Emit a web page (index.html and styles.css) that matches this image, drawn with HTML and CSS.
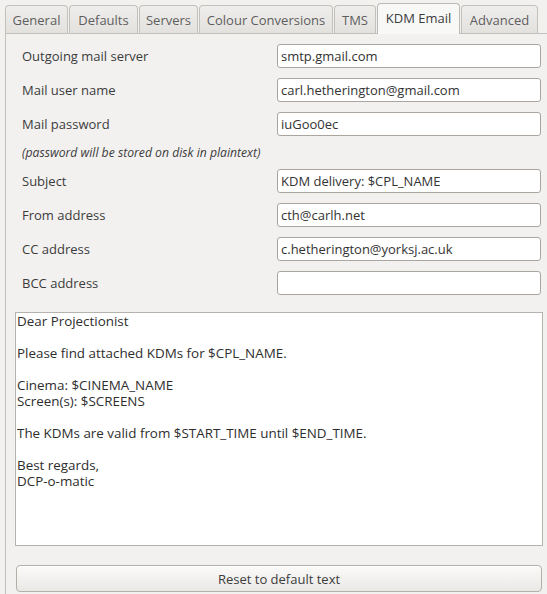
FILE: index.html
```html
<!DOCTYPE html>
<html>
<head>
<meta charset="utf-8">
<link rel="stylesheet" href="styles.css">
</head>
<body>
<div class="tabs">
  <div class="tab t-general">General</div>
  <div class="tab t-defaults">Defaults</div>
  <div class="tab t-servers">Servers</div>
  <div class="tab t-colour">Colour Conversions</div>
  <div class="tab t-tms">TMS</div>
  <div class="tab active t-kdm">KDM Email</div>
  <div class="tab t-adv">Advanced</div>
</div>
<div class="panel">
  <div class="form">
    <label class="lbl">Outgoing mail server</label>
    <div class="field">smtp.gmail.com</div>
    <label class="lbl">Mail user name</label>
    <div class="field">carl.hetherington@gmail.com</div>
    <label class="lbl">Mail password</label>
    <div class="field">iuGoo0ec</div>
    <div class="hint">(password will be stored on disk in plaintext)</div>
    <label class="lbl">Subject</label>
    <div class="field">KDM delivery: $CPL_NAME</div>
    <label class="lbl">From address</label>
    <div class="field">cth@carlh.net</div>
    <label class="lbl">CC address</label>
    <div class="field">c.hetherington@yorksj.ac.uk</div>
    <label class="lbl">BCC address</label>
    <div class="field"></div>
  </div>
  <div class="body-text">Dear Projectionist

Please find attached KDMs for $CPL_NAME.

Cinema: $CINEMA_NAME
Screen(s): $SCREENS

The KDMs are valid from $START_TIME until $END_TIME.

Best regards,
DCP-o-matic</div>
  <div class="reset">Reset to default text</div>
</div>
</body>
</html>
```

FILE: styles.css
```css
* { box-sizing: border-box; }
html, body {
  margin: 0;
  padding: 0;
  background: #f2f1f0;
  font-family: "Open Sans", "Noto Sans", sans-serif;
  font-size: 13px;
  color: #3c3c3c;
  width: 547px;
  height: 594px;
  overflow: hidden;
}
.tabs {
  display: flex;
  align-items: flex-end;
  height: 33px;
  padding-left: 5px;
  gap: 1px;
}
.tab {
  height: 28px;
  border: 1px solid #c4c0bb;
  border-bottom: none;
  border-radius: 4px 4px 0 0;
  background: linear-gradient(#efeeec, #e3e1de);
  color: #5e5e5e;
  display: flex;
  align-items: center;
  justify-content: center;
  padding-top: 1px;
}
.tab.active {
  background: #f8f8f7;
  color: #3c3c3c;
  border-color: #bdb9b4;
  margin-bottom: -1px;
  height: 31px;
  padding-top: 0;
  padding-bottom: 2px;
}
.t-general { width: 63px; }
.t-defaults { width: 69px; }
.t-servers { width: 59px; }
.t-colour { width: 134px; }
.t-tms { width: 42px; }
.t-kdm { width: 83px; }
.t-adv { width: 77px; }
.panel {
  border-left: 1px solid #c4c0bb;
  border-top: 1px solid #c4c0bb;
  margin-left: 5px;
  height: 561px;
  padding: 10px 0 0 9px;
}
.form {
  display: grid;
  grid-template-columns: 255px 264px;
  row-gap: 10px;
  padding-left: 7px;
  align-items: center;
}
.lbl {
  color: #3c3c3c;
}
.field {
  height: 24px;
  background: #fff;
  border: 1px solid #aaa59f;
  border-radius: 3px;
  padding: 0 3px;
  line-height: 22px;
  color: #333;
  white-space: nowrap;
  overflow: hidden;
}
.hint {
  grid-column: 1 / 3;
  font-style: italic;
  font-size: 12.2px;
  height: 13px;
  line-height: 13px;
}
.body-text {
  margin-top: 17px;
  width: 528px;
  height: 234px;
  background: #fff;
  border: 1px solid #b6b2ad;
  white-space: pre;
  font-size: 13.4px;
  line-height: 16px;
  padding: 0 1px;
  color: #2e2e2e;
}
.reset {
  margin: 19px 0 0 1px;
  width: 526px;
  height: 27px;
  border: 1px solid #b3afa9;
  border-radius: 4px;
  background: linear-gradient(#fafaf9, #ebe9e7);
  box-shadow: inset 0 1px 0 #fff;
  display: flex;
  align-items: center;
  justify-content: center;
  color: #3c3c3c;
}
```
